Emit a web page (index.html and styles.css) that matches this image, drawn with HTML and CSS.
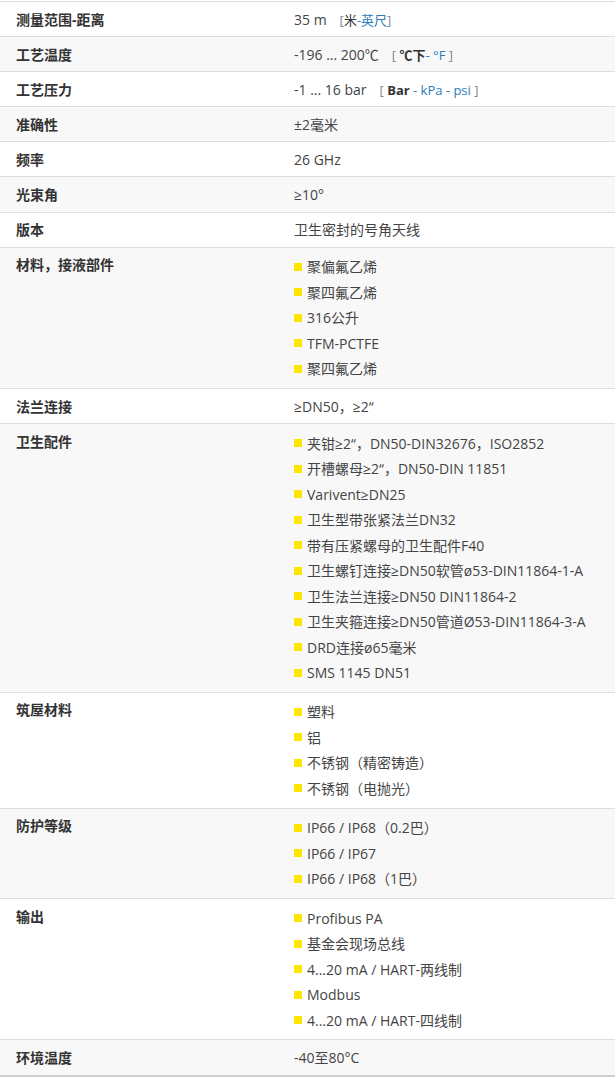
FILE: index.html
```html
<!DOCTYPE html>
<html lang="zh">
<head>
<meta charset="utf-8">
<title>技术参数</title>
<link rel="stylesheet" href="styles.css">
</head>
<body>
<div class="specs">
  <div class="row">
    <div class="label">测量范围-距离</div>
    <div class="value">35 m<span class="units">[<span class="cur">米</span><a class="alt">-英尺</a>]</span></div>
  </div>
  <div class="row">
    <div class="label">工艺温度</div>
    <div class="value">-196 ... 200℃<span class="units">[ <b class="cur">℃下</b><a class="alt">- °F</a> ]</span></div>
  </div>
  <div class="row">
    <div class="label">工艺压力</div>
    <div class="value">-1 ... 16 bar<span class="units">[ <b class="cur">Bar</b><a class="alt"> - kPa - psi</a> ]</span></div>
  </div>
  <div class="row">
    <div class="label">准确性</div>
    <div class="value">±2毫米</div>
  </div>
  <div class="row">
    <div class="label">频率</div>
    <div class="value">26 GHz</div>
  </div>
  <div class="row">
    <div class="label">光束角</div>
    <div class="value">≥10°</div>
  </div>
  <div class="row">
    <div class="label">版本</div>
    <div class="value">卫生密封的号角天线</div>
  </div>
  <div class="row">
    <div class="label">材料，接液部件</div>
    <ul class="value list">
      <li>聚偏氟乙烯</li>
      <li>聚四氟乙烯</li>
      <li>316公升</li>
      <li>TFM-PCTFE</li>
      <li>聚四氟乙烯</li>
    </ul>
  </div>
  <div class="row">
    <div class="label">法兰连接</div>
    <div class="value">≥DN50，≥2“</div>
  </div>
  <div class="row">
    <div class="label">卫生配件</div>
    <ul class="value list">
      <li>夹钳≥2“，DN50-DIN32676，ISO2852</li>
      <li>开槽螺母≥2“，DN50-DIN 11851</li>
      <li>Varivent≥DN25</li>
      <li>卫生型带张紧法兰DN32</li>
      <li>带有压紧螺母的卫生配件F40</li>
      <li>卫生螺钉连接≥DN50软管ø53-DIN11864-1-A</li>
      <li>卫生法兰连接≥DN50 DIN11864-2</li>
      <li>卫生夹箍连接≥DN50管道Ø53-DIN11864-3-A</li>
      <li>DRD连接ø65毫米</li>
      <li>SMS 1145 DN51</li>
    </ul>
  </div>
  <div class="row">
    <div class="label">筑屋材料</div>
    <ul class="value list">
      <li>塑料</li>
      <li>铝</li>
      <li>不锈钢（精密铸造）</li>
      <li>不锈钢（电抛光）</li>
    </ul>
  </div>
  <div class="row">
    <div class="label">防护等级</div>
    <ul class="value list">
      <li>IP66 / IP68（0.2巴）</li>
      <li>IP66 / IP67</li>
      <li>IP66 / IP68（1巴）</li>
    </ul>
  </div>
  <div class="row">
    <div class="label">输出</div>
    <ul class="value list">
      <li>Profibus PA</li>
      <li>基金会现场总线</li>
      <li>4...20 mA / HART-两线制</li>
      <li>Modbus</li>
      <li>4...20 mA / HART-四线制</li>
    </ul>
  </div>
  <div class="row last">
    <div class="label">环境温度</div>
    <div class="value">-40至80°C</div>
  </div>
</div>
</body>
</html>
```

FILE: styles.css
```css
html, body {
  margin: 0;
  padding: 0;
  background: #ffffff;
  overflow: hidden;
}

body {
  font-family: "Open Sans", "Noto Sans CJK SC", sans-serif;
  font-size: 14px;
  line-height: 21.1px;
  color: #3a3a3a;
}

.specs {
  padding-top: 1px;
}

.row {
  display: grid;
  grid-template-columns: 278px 1fr;
  border-top: 1px solid #dddddd;
}

.row:nth-child(even) {
  background: #f8f8f8;
}

.row.last {
  border-bottom: 2px solid #cfcfcf;
}

.label,
.value {
  padding: 6.5px 16px;
}

.label {
  font-weight: 700;
  color: #333333;
}

.value {
  color: #444444;
}

.units {
  margin-left: 13px;
  font-size: 13px;
  line-height: 1;
  color: #888888;
}

.units .cur {
  color: #333333;
}

.units b.cur {
  font-weight: 700;
}

.units .alt {
  color: #2b7bbd;
  text-decoration: none;
}

.list {
  list-style: none;
  margin: 0;
}

.list li {
  display: flex;
  align-items: center;
  gap: 5px;
  padding: 2.2px 0;
}

.list li::before {
  content: "";
  flex: none;
  width: 8px;
  height: 8px;
  background: #ffe600;
}
```
